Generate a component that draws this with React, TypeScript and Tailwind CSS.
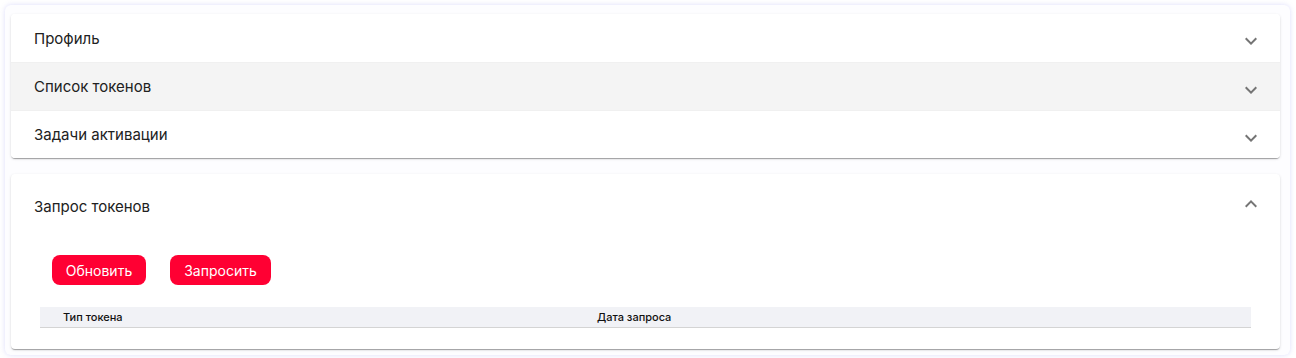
import React from "react";

const Chevron = ({ up = false }: { up?: boolean }) => (
  <svg width="24" height="24" viewBox="0 0 24 24" className={up ? "rotate-180" : ""}>
    <path d="M16.59 8.59 12 13.17 7.41 8.59 6 10l6 6 6-6z" fill="#757575" />
  </svg>
);

const Row = ({ title, shaded = false, border = true }: { title: string; shaded?: boolean; border?: boolean }) => (
  <div
    className={`flex items-center justify-between h-[48px] pl-[23px] pr-[17px] ${shaded ? "bg-[#f4f4f4]" : "bg-white"} ${border ? "border-t border-[#f0f0f0]" : ""}`}
  >
    <span className="text-[15px] text-[#212121] pt-[2px]">{title}</span>
    <span className="pt-[6px]"><Chevron /></span>
  </div>
);

export default function App() {
  return (
    <div className="w-[1296px] h-[358px] bg-white pl-[5px] pr-[6px] pt-[5px]" style={{ fontFamily: "Inter, 'Noto Sans', sans-serif" }}>
      <div className="h-[350px] rounded-[6px] bg-[#fdfdff] shadow-[0_0_5px_rgba(120,120,240,0.25)] pl-[6px] pr-[10px] pt-[9px] flex flex-col gap-[16px]">
        <div className="rounded-[4px] bg-white overflow-hidden shadow-[0_2px_1px_-1px_rgba(0,0,0,0.2),0_1px_1px_0_rgba(0,0,0,0.14),0_1px_3px_0_rgba(0,0,0,0.12)]">
          <Row title="Профиль" border={false} />
          <Row title="Список токенов" shaded />
          <Row title="Задачи активации" />
        </div>
        <div className="rounded-[4px] bg-white shadow-[0_2px_1px_-1px_rgba(0,0,0,0.2),0_1px_1px_0_rgba(0,0,0,0.14),0_1px_3px_0_rgba(0,0,0,0.12)] pb-[21px]">
          <div className="flex items-center justify-between h-[64px] pl-[23px] pr-[17px]">
            <span className="text-[15px] text-[#212121] pt-[2px]">Запрос токенов</span>
            <span className="pb-[4px]"><Chevron up /></span>
          </div>
          <div className="px-[29px] pt-[17px]">
            <div className="flex gap-[24px] pl-[12px]">
              <button className="h-[30px] w-[94px] rounded-[8px] bg-[#ff0033] text-white text-[14px]">Обновить</button>
              <button className="h-[30px] w-[101px] rounded-[8px] bg-[#ff0033] text-white text-[14px]">Запросить</button>
            </div>
            <div className="mt-[22px] h-[21px] bg-[#f1f2f6] border-b border-[#d4d4d4] flex items-center text-[11px] font-medium text-[#111]">
              <span className="pl-[23px] w-[557px]">Тип токена</span>
              <span>Дата запроса</span>
            </div>
          </div>
        </div>
      </div>
    </div>
  );
}
